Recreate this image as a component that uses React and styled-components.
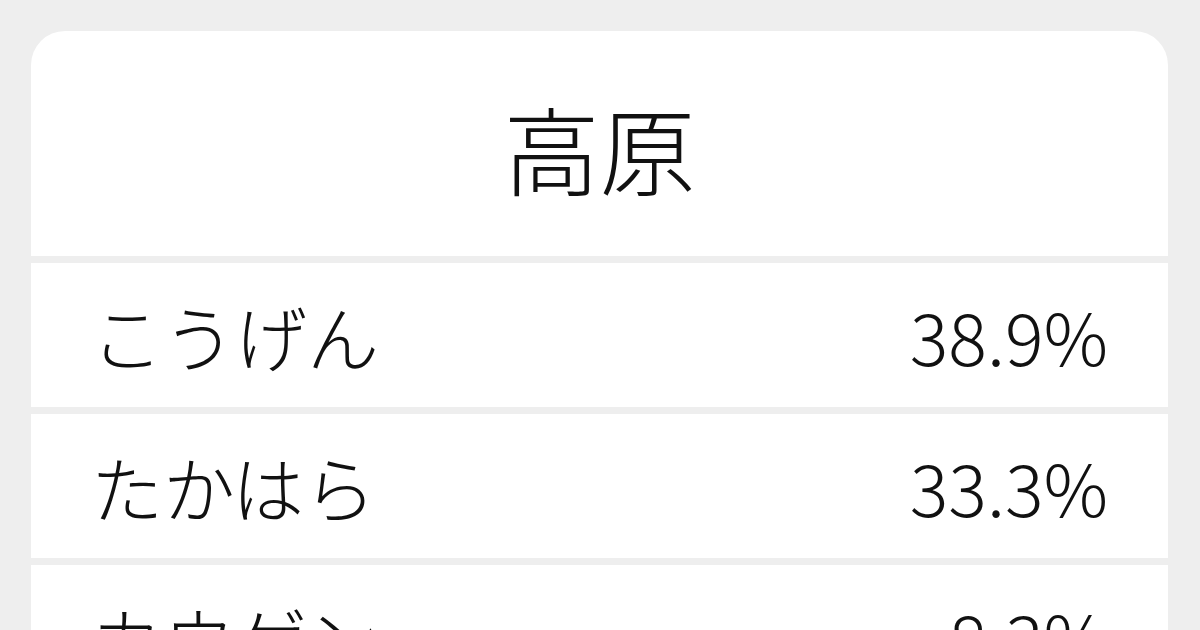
import React from "react";
import styled, { createGlobalStyle } from "styled-components";

const GlobalStyle = createGlobalStyle`
  html, body {
    margin: 0;
    padding: 0;
    background: #eeeeee;
    font-family: "Noto Sans CJK JP", "Noto Sans", sans-serif;
    color: #111111;
  }
`;

const Page = styled.div`
  width: 1200px;
  height: 630px;
  overflow: hidden;
  padding: 31px 0 0 31px;
  box-sizing: border-box;
`;

const Card = styled.div`
  width: 1137px;
  display: flex;
  flex-direction: column;
  gap: 7px;
  border-radius: 34px 34px 0 0;
  overflow: hidden;
`;

const Title = styled.h1`
  margin: 0;
  height: 225px;
  background: #ffffff;
  display: flex;
  align-items: center;
  justify-content: center;
  font-size: 96px;
  font-weight: 300;
  line-height: 1;
  padding-top: 6px;
  box-sizing: border-box;
`;

const Row = styled.div`
  height: 144px;
  flex-shrink: 0;
  background: #ffffff;
  display: flex;
  align-items: center;
  justify-content: space-between;
  padding: 0 60px 0 60px;
  box-sizing: border-box;
  font-size: 72px;
  font-weight: 300;
  line-height: 1;
`;

const Reading = styled.span``;
const Ratio = styled.span``;

const readings = [
  { kana: "こうげん", ratio: "38.9%" },
  { kana: "たかはら", ratio: "33.3%" },
  { kana: "カウゲン", ratio: "8.3%" },
];

export default function App() {
  return (
    <>
      <GlobalStyle />
      <Page>
        <Card>
          <Title>高原</Title>
          {readings.map((r) => (
            <Row key={r.kana}>
              <Reading>{r.kana}</Reading>
              <Ratio>{r.ratio}</Ratio>
            </Row>
          ))}
        </Card>
      </Page>
    </>
  );
}
